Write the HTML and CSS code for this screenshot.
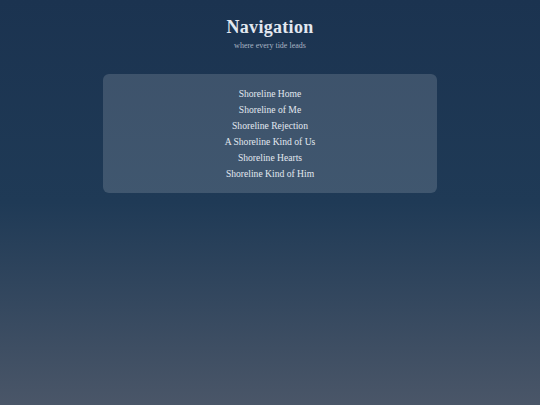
FILE: index.html
```html
<!DOCTYPE html>
<html lang="en">
<head>
    <meta charset="UTF-8">
    <meta name="viewport" content="width=device-width, initial-scale=1.0">
    <title>Navigation</title>
    <link rel="stylesheet" href="styles.css">
</head>
<body>
    <header class="page-header">
        <h1>Navigation</h1>
        <p class="tagline">where every tide leads</p>
    </header>
    <nav class="nav-panel">
        <ul class="nav-list">
            <li><a href="#">Shoreline Home</a></li>
            <li><a href="#">Shoreline of Me</a></li>
            <li><a href="#">Shoreline Rejection</a></li>
            <li><a href="#">A Shoreline Kind of Us</a></li>
            <li><a href="#">Shoreline Hearts</a></li>
            <li><a href="#">Shoreline Kind of Him</a></li>
        </ul>
    </nav>
</body>
</html>
```

FILE: styles.css
```css
html {
    min-height: 100%;
    background: linear-gradient(to bottom, #1b3350 0%, #1f3a56 50%, #4a5668 100%);
}
body {
    margin: 0;
    min-height: 100vh;
    font-family: 'Liberation Serif', 'Times New Roman', serif;
    color: #e2e8f0;
    display: flex;
    flex-direction: column;
    align-items: center;
}
.page-header {
    text-align: center;
    padding-top: 17px;
}
h1 {
    margin: 0;
    font-size: 18px;
    font-weight: bold;
    color: #e2e8f0;
    letter-spacing: 0.3px;
}
.tagline {
    margin: 3px 0 0;
    font-size: 8px;
    color: #a8b4c2;
}
.nav-panel {
    margin-top: 24px;
    width: 334px;
    box-sizing: border-box;
    padding: 12px 0 11px;
    background: rgba(255, 255, 255, 0.15);
    border-radius: 6px;
}
.nav-list {
    list-style: none;
    margin: 0;
    padding: 0;
    text-align: center;
}
.nav-list li {
    font-size: 9.6px;
    line-height: 16px;
}
.nav-list a {
    color: #e2e8f0;
    text-decoration: none;
}
```
